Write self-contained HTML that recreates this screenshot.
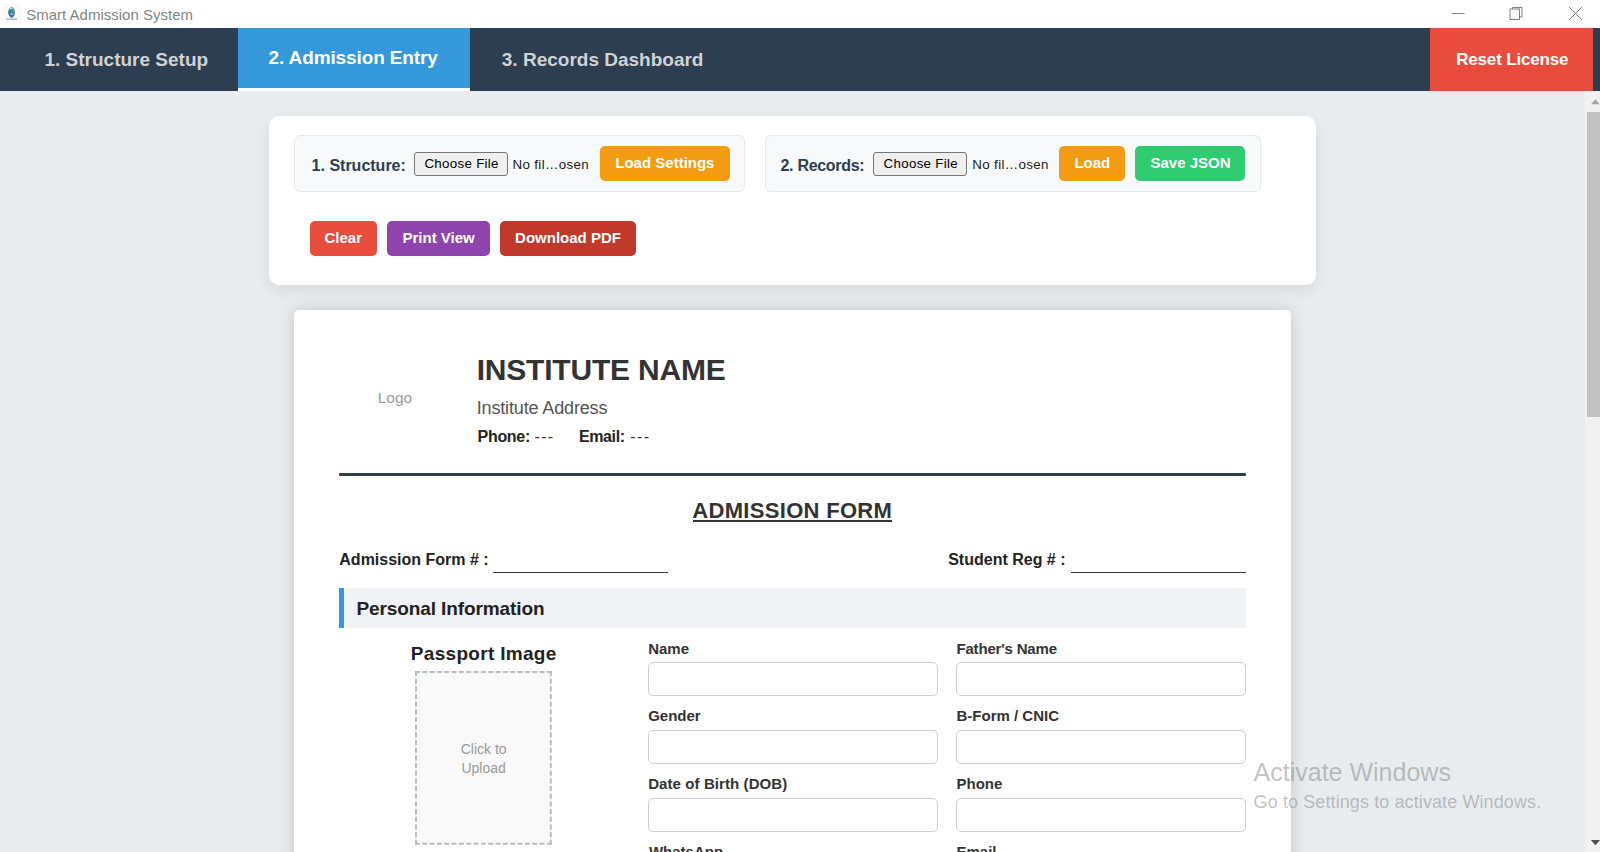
<!DOCTYPE html>
<html>
<head>
<meta charset="utf-8">
<title>Smart Admission System</title>
<style>
html,body{margin:0;padding:0;}
body{width:1600px;height:852px;overflow:hidden;position:relative;background:#e9ecef;font-family:"Liberation Sans",sans-serif;}
.t{position:absolute;white-space:nowrap;}
.b{position:absolute;box-sizing:border-box;}
</style>
</head>
<body>
<!-- title bar -->
<div class="b" style="left:0;top:0;width:1600px;height:28px;background:#fff;"></div>
<svg class="b" style="left:0;top:0;" width="28" height="28" viewBox="0 0 28 28">
  <defs><linearGradient id="gl" x1="0" y1="1" x2="1" y2="0"><stop offset="0.35" stop-color="#3f6ea8"/><stop offset="1" stop-color="#5cc08f"/></linearGradient></defs>
  <rect x="2" y="4" width="20" height="19.5" fill="#f9f9f9"/>
  <ellipse cx="11.65" cy="12.3" rx="3.4" ry="5.4" fill="url(#gl)"/>
  <path d="M9.5 9 Q11 7.5 12.5 8.5" stroke="#eaf4f6" stroke-width="0.9" fill="none"/>
  <rect x="10.6" y="13.2" width="2" height="1.6" fill="#b9cde0"/>
  <rect x="6.3" y="18.6" width="10.7" height="1.1" fill="#8aa3c6"/>
</svg>
<!-- window controls -->
<svg class="b" style="left:1440px;top:0;" width="160" height="28" viewBox="0 0 160 28">
  <line x1="12" y1="13.5" x2="24.5" y2="13.5" stroke="#808080" stroke-width="1"/>
  <rect x="70" y="9" width="9.5" height="10.5" fill="none" stroke="#808080" stroke-width="1"/>
  <path d="M72.5 9 V7.5 H82 V17 H79.5" fill="none" stroke="#808080" stroke-width="1"/>
  <line x1="129" y1="7" x2="142" y2="20" stroke="#808080" stroke-width="1"/>
  <line x1="142" y1="7" x2="129" y2="20" stroke="#808080" stroke-width="1"/>
</svg>
<!-- navbar -->
<div class="b" style="left:0;top:28px;width:1600px;height:63px;background:#2c3e50;"></div>
<div class="b" style="left:237.5px;top:28px;width:232.5px;height:59.5px;background:#3498db;"></div>
<div class="b" style="left:237.5px;top:87.5px;width:232.5px;height:3px;background:#ffffff;"></div>
<div class="b" style="left:1430px;top:28px;width:163px;height:63px;background:#e74c3c;"></div>

<!-- scrollbar -->
<div class="b" style="left:1585px;top:91px;width:15px;height:761px;background:#f1f1f1;"></div>
<div class="b" style="left:1587px;top:112px;width:13px;height:305px;background:#c1c1c1;"></div>
<svg class="b" style="left:1585px;top:91px;" width="15" height="20" viewBox="0 0 15 20">
  <path d="M6 13.2 L10.4 8.3 L14.8 13.2 Z" fill="#a3a3a3"/>
</svg>
<svg class="b" style="left:1585px;top:832px;" width="15" height="20" viewBox="0 0 15 20">
  <path d="M5.8 8 L15 8 L10.4 13.2 Z" fill="#505050"/>
</svg>

<!-- top card -->
<div class="b" style="left:269px;top:116px;width:1047px;height:169px;background:#fff;border-radius:10px;box-shadow:0 5px 15px rgba(0,0,0,0.08);"></div>
<div class="b" style="left:294px;top:135px;width:451px;height:57px;background:#f8f9fa;border:1px solid #e6e8eb;border-radius:6px;"></div>
<div class="b" style="left:764.5px;top:135px;width:496.5px;height:57px;background:#f8f9fa;border:1px solid #e6e8eb;border-radius:6px;"></div>
<!-- file buttons -->
<div class="b" style="left:414px;top:152px;width:93.5px;height:23.5px;background:#efefef;border:1px solid #767676;border-radius:3px;"></div>
<div class="b" style="left:873.3px;top:152px;width:93.5px;height:23.5px;background:#efefef;border:1px solid #767676;border-radius:3px;"></div>
<!-- colored buttons -->
<div class="b" style="left:600px;top:146px;width:129.5px;height:35px;background:#f39c12;border-radius:5px;"></div>
<div class="b" style="left:1059.2px;top:146px;width:65.5px;height:35px;background:#f39c12;border-radius:5px;"></div>
<div class="b" style="left:1135px;top:146px;width:110px;height:35px;background:#2ecc71;border-radius:5px;"></div>
<div class="b" style="left:309.75px;top:221px;width:67.25px;height:34.6px;background:#e74c3c;border-radius:5px;"></div>
<div class="b" style="left:387.25px;top:221px;width:102.75px;height:34.6px;background:#8e44ad;border-radius:5px;"></div>
<div class="b" style="left:500.2px;top:221px;width:135.8px;height:34.6px;background:#c0392b;border-radius:5px;"></div>

<!-- form paper -->
<div class="b" style="left:294px;top:310px;width:997px;height:700px;background:#fff;border-radius:5px;box-shadow:0 0 16px rgba(0,0,0,0.16);"></div>
<div class="b" style="left:339px;top:473px;width:907px;height:3px;background:#2c3e50;border-radius:1px;"></div>
<div class="b" style="left:693px;top:520px;width:199px;height:2px;background:#333;"></div>
<div class="b" style="left:493px;top:571.5px;width:175px;height:1px;background:#333;"></div>
<div class="b" style="left:1071px;top:571.5px;width:175px;height:1px;background:#333;"></div>
<!-- section header -->
<div class="b" style="left:339px;top:588px;width:907px;height:40px;background:#f0f2f5;border-left:5px solid #3498db;"></div>
<!-- passport box -->
<div class="b" style="left:415px;top:670.6px;width:136.8px;height:173.8px;background:#f9f9f9;"></div>
<svg class="b" style="left:415px;top:670.6px;overflow:visible" width="136.8" height="173.8" viewBox="0 0 136.8 173.8">
<g stroke="#b9bdc2" stroke-width="2" fill="none">
<line x1="0" y1="1" x2="136.8" y2="1" stroke-dasharray="4.850 2.480"/>
<line x1="0" y1="172.8" x2="136.8" y2="172.8" stroke-dasharray="4.850 2.480"/>
<line x1="1" y1="0" x2="1" y2="173.8" stroke-dasharray="5.075 2.595"/>
<line x1="135.8" y1="0" x2="135.8" y2="173.8" stroke-dasharray="5.075 2.595"/>
</g></svg>
<!-- inputs -->
<div class="b" style="left:647.5px;top:662px;width:290.2px;height:33.6px;border:1px solid #cfcfcf;border-radius:5px;background:#fff;"></div>
<div class="b" style="left:956px;top:662px;width:289.6px;height:33.6px;border:1px solid #cfcfcf;border-radius:5px;background:#fff;"></div>
<div class="b" style="left:647.5px;top:730px;width:290.2px;height:33.6px;border:1px solid #cfcfcf;border-radius:5px;background:#fff;"></div>
<div class="b" style="left:956px;top:730px;width:289.6px;height:33.6px;border:1px solid #cfcfcf;border-radius:5px;background:#fff;"></div>
<div class="b" style="left:647.5px;top:798px;width:290.2px;height:33.6px;border:1px solid #cfcfcf;border-radius:5px;background:#fff;"></div>
<div class="b" style="left:956px;top:798px;width:289.6px;height:33.6px;border:1px solid #cfcfcf;border-radius:5px;background:#fff;"></div>

<div class="t" id="title" style="left:26.25px;top:4.00px;font-size:15px;font-weight:400;color:#858585;line-height:21px;">Smart Admission System</div>
<div class="t" id="tab1" style="left:44.50px;top:46.00px;font-size:19px;font-weight:700;color:#d0d3d6;line-height:27px;">1. Structure Setup</div>
<div class="t" id="tab2" style="left:268.50px;top:44.30px;font-size:19px;font-weight:700;color:#ffffff;line-height:27px;letter-spacing:-0.118px;">2. Admission Entry</div>
<div class="t" id="tab3" style="left:501.80px;top:46.00px;font-size:19px;font-weight:700;color:#d0d3d6;line-height:27px;">3. Records Dashboard</div>
<div class="t" id="reset" style="left:1456.20px;top:48.11px;font-size:17px;font-weight:700;color:#ffffff;line-height:24px;letter-spacing:-0.167px;">Reset License</div>
<div class="t" id="lbl1" style="left:311.60px;top:154.61px;font-size:16px;font-weight:700;color:#2c3e50;line-height:22px;">1. Structure:</div>
<div class="t" id="cf1" style="left:424.40px;top:153.50px;font-size:13.33px;font-weight:400;color:#000000;line-height:19px;letter-spacing:0.300px;">Choose File</div>
<div class="t" id="nf1" style="left:512.50px;top:154.75px;font-size:13.33px;font-weight:400;color:#1a1a1a;line-height:19px;letter-spacing:0.350px;">No fil…osen</div>
<div class="t" id="ls" style="left:615.30px;top:152.00px;font-size:15px;font-weight:700;color:#ffffff;line-height:21px;">Load Settings</div>
<div class="t" id="lbl2" style="left:780.50px;top:154.61px;font-size:16px;font-weight:700;color:#2c3e50;line-height:22px;letter-spacing:-0.300px;">2. Records:</div>
<div class="t" id="cf2" style="left:883.60px;top:153.50px;font-size:13.33px;font-weight:400;color:#000000;line-height:19px;letter-spacing:0.300px;">Choose File</div>
<div class="t" id="nf2" style="left:972.30px;top:154.75px;font-size:13.33px;font-weight:400;color:#1a1a1a;line-height:19px;letter-spacing:0.350px;">No fil…osen</div>
<div class="t" id="load" style="left:1074.40px;top:152.00px;font-size:15px;font-weight:700;color:#ffffff;line-height:21px;">Load</div>
<div class="t" id="save" style="left:1150.50px;top:152.00px;font-size:15px;font-weight:700;color:#ffffff;line-height:21px;">Save JSON</div>
<div class="t" id="clear" style="left:324.50px;top:227.10px;font-size:15px;font-weight:700;color:#ffffff;line-height:21px;">Clear</div>
<div class="t" id="print" style="left:402.50px;top:227.10px;font-size:15px;font-weight:700;color:#ffffff;line-height:21px;">Print View</div>
<div class="t" id="dl" style="left:515.10px;top:227.10px;font-size:15px;font-weight:700;color:#ffffff;line-height:21px;">Download PDF</div>
<div class="t" id="logo" style="left:377.70px;top:386.91px;font-size:15.5px;font-weight:400;color:#9a9a9a;line-height:22px;">Logo</div>
<div class="t" id="iname" style="left:476.70px;top:349.41px;font-size:30px;font-weight:700;color:#333333;line-height:42px;letter-spacing:-0.200px;">INSTITUTE NAME</div>
<div class="t" id="iaddr" style="left:476.70px;top:395.80px;font-size:18px;font-weight:400;color:#555555;line-height:25px;letter-spacing:-0.144px;">Institute Address</div>
<div class="t" id="phone" style="left:477.60px;top:426.00px;font-size:16px;font-weight:700;color:#222222;line-height:22px;letter-spacing:-0.320px;">Phone:</div>
<div class="t" id="phonev" style="left:534.50px;top:426.00px;font-size:16px;font-weight:400;color:#333333;line-height:22px;letter-spacing:1.350px;">---</div>
<div class="t" id="email" style="left:578.90px;top:426.00px;font-size:16px;font-weight:700;color:#222222;line-height:22px;letter-spacing:-0.360px;">Email:</div>
<div class="t" id="emailv" style="left:630.30px;top:426.00px;font-size:16px;font-weight:400;color:#333333;line-height:22px;letter-spacing:1.350px;">---</div>
<div class="t" id="aform" style="left:292.25px;width:1000px;text-align:center;top:495.10px;font-size:22px;font-weight:700;color:#333333;line-height:31px;letter-spacing:0.308px;">ADMISSION FORM</div>
<div class="t" id="afno" style="left:339.30px;top:548.91px;font-size:16px;font-weight:700;color:#222222;line-height:22px;">Admission Form # :</div>
<div class="t" id="sreg" style="left:948.20px;top:548.91px;font-size:16px;font-weight:700;color:#222222;line-height:22px;">Student Reg # :</div>
<div class="t" id="pinfo" style="left:356.50px;top:594.80px;font-size:19px;font-weight:700;color:#222222;line-height:27px;letter-spacing:-0.105px;">Personal Information</div>
<div class="t" id="pimg" style="left:-16.30px;width:1000px;text-align:center;top:639.50px;font-size:19px;font-weight:700;color:#222222;line-height:27px;letter-spacing:0.308px;">Passport Image</div>
<div class="t" id="click" style="left:-16.40px;width:1000px;text-align:center;top:738.60px;font-size:14px;font-weight:400;color:#9a9a9a;line-height:20px;">Click to</div>
<div class="t" id="upload" style="left:-16.40px;width:1000px;text-align:center;top:757.70px;font-size:14px;font-weight:400;color:#9a9a9a;line-height:20px;">Upload</div>
<div class="t" id="name" style="left:648.20px;top:638.10px;font-size:15px;font-weight:700;color:#333333;line-height:21px;">Name</div>
<div class="t" id="fname" style="left:956.50px;top:638.10px;font-size:15px;font-weight:700;color:#333333;line-height:21px;letter-spacing:-0.192px;">Father's Name</div>
<div class="t" id="gender" style="left:648.20px;top:705.40px;font-size:15px;font-weight:700;color:#333333;line-height:21px;">Gender</div>
<div class="t" id="bform" style="left:956.50px;top:705.40px;font-size:15px;font-weight:700;color:#333333;line-height:21px;">B-Form / CNIC</div>
<div class="t" id="dob" style="left:648.20px;top:773.40px;font-size:15px;font-weight:700;color:#333333;line-height:21px;letter-spacing:0.089px;">Date of Birth (DOB)</div>
<div class="t" id="phone2" style="left:956.50px;top:773.40px;font-size:15px;font-weight:700;color:#333333;line-height:21px;">Phone</div>
<div class="t" id="whatsapp" style="left:648.90px;top:841.30px;font-size:15px;font-weight:700;color:#333333;line-height:21px;">WhatsApp</div>
<div class="t" id="email2" style="left:956.50px;top:841.30px;font-size:15px;font-weight:700;color:#333333;line-height:21px;">Email</div>
<div class="t" id="aw1" style="left:1253.60px;top:755.00px;font-size:25px;font-weight:400;color:rgba(100,100,100,0.40);line-height:35px;">Activate Windows</div>
<div class="t" id="aw2" style="left:1253.60px;top:790.00px;font-size:18px;font-weight:400;color:rgba(100,100,100,0.40);line-height:25px;letter-spacing:0.100px;">Go to Settings to activate Windows.</div>
</body>
</html>
